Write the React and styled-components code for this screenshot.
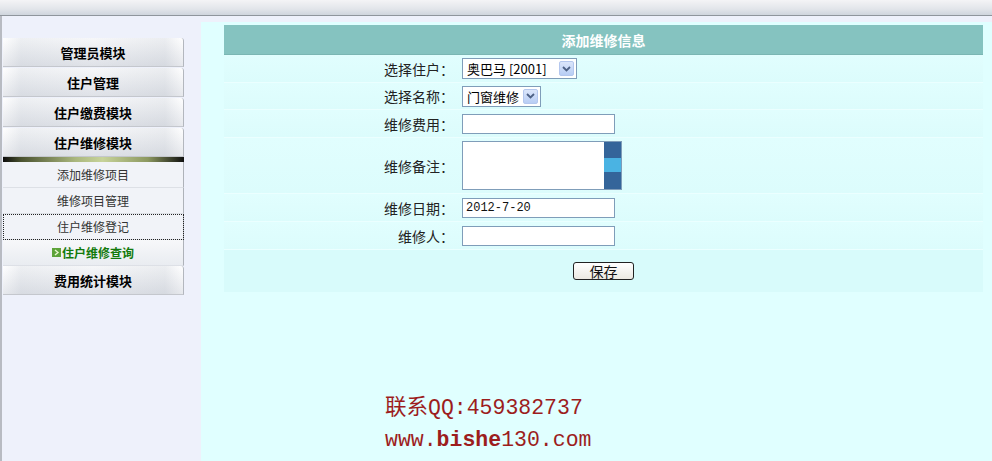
import React from "react";
import styled, { createGlobalStyle } from "styled-components";

const Global = createGlobalStyle`
  html, body { margin: 0; padding: 0; }
  body {
    background: #eef1fb;
    font-family: "Noto Sans CJK SC", "Liberation Sans", sans-serif;
    font-size: 13px;
    color: #222;
    height: 461px;
    overflow: hidden;
  }
`;

const TopBar = styled.div`
  height: 15px;
  background: linear-gradient(#f4f4f6, #e2e5ea 60%, #cfd5dd);
  border-bottom: 1px solid #8f959c;
`;

const Layout = styled.div`
  display: flex;
  height: 445px;
`;

const Sidebar = styled.div`
  width: 199px;
  border-left: 2px solid #b8bbc2;
  padding-top: 22px;
  background: #eef1fb;
`;

const Menu = styled.div`
  width: 181px;
  margin-left: 1px;
  display: flex;
  flex-direction: column;
`;

const MenuHead = styled.div`
  height: 29px;
  margin-bottom: 1px;
  display: flex;
  align-items: center;
  justify-content: center;
  font-weight: 700;
  font-size: 13px;
  color: #000;
  background: linear-gradient(to right, #ffffff, #eef0f3 10%, #f6f7f9 50%, #eceef1 90%, #ffffff),
    linear-gradient(#fff, #e7e9ed);
  background-blend-mode: multiply;
  border-right: 1px solid #b3b7be;
  border-bottom: 1px solid #c4c7cd;
  border-radius: 0 3px 0 0;
  box-sizing: border-box;
`;

const Divider = styled.div`
  height: 5px;
  background: linear-gradient(to right, #0d0d0d, #4a5230 10%, #aab77e 40%, #c7d39a 55%, #8c9860 80%, #101010);
  margin-top: -1px;
`;

const SubItem = styled.div`
  height: 26px;
  display: flex;
  align-items: center;
  justify-content: center;
  gap: 1px;
  font-size: 12px;
  color: ${(p) => (p.$active ? "#137a0c" : "#333")};
  font-weight: ${(p) => (p.$active ? 700 : 400)};
  background: ${(p) =>
    p.$active ? "linear-gradient(#f7f8fa, #e9ecf1)" : "#f1f3f8"};
  border-right: 1px solid #aeb2b9;
  border-bottom: 1px solid #dde0e6;
  box-sizing: border-box;
  outline: ${(p) => (p.$focus ? "1px dotted #222" : "none")};
  outline-offset: -1px;
`;

const Main = styled.div`
  flex: 1;
  margin-top: 6px;
  background: #e0ffff;
  padding: 3px 9px 0 23px;
  display: flex;
  flex-direction: column;
`;

const Header = styled.div`
  height: 30px;
  background: #85c3c0;
  color: #fff;
  font-weight: 700;
  font-size: 14px;
  display: flex;
  align-items: center;
  justify-content: center;
  border-bottom: 1px solid #7ab6b3;
  box-sizing: border-box;
`;

const Row = styled.div`
  display: grid;
  grid-template-columns: 231px 1fr;
  align-items: center;
  min-height: ${(p) => p.$h}px;
  background: linear-gradient(#e1fefe, #dcfcfc);
  border-bottom: 1px solid #ebffff;
  box-sizing: border-box;
`;

const Label = styled.div`
  text-align: right;
  padding-right: 1px;
  color: #222;
  font-size: 14px;
`;

const Cell = styled.div`
  padding-left: 7px;
  display: flex;
  align-items: center;
`;

const ButtonRow = styled.div`
  height: 42px;
  background: #d8fbfb;
  display: flex;
  align-items: center;
  padding-left: 349px;
`;

const Select = styled.div`
  width: ${(p) => p.$w}px;
  height: 21px;
  box-sizing: border-box;
  border: 1px solid #7f9db9;
  background: #fff;
  display: flex;
  align-items: center;
  justify-content: space-between;
  padding: 0 2px 0 4px;
  font-size: 13px;
  color: #000;
`;

const Arrow = styled.div`
  width: 15px;
  height: 15px;
  border-radius: 2px;
  background: linear-gradient(#dbe6fb, #b8cdf4);
  border: 1px solid #b4c7ee;
  box-sizing: border-box;
  display: flex;
  align-items: center;
  justify-content: center;
`;

const Input = styled.div`
  width: 153px;
  height: 20px;
  box-sizing: border-box;
  border: 1px solid #7f9db9;
  background: #fff;
  font-family: "Liberation Mono", "Noto Sans CJK SC", monospace;
  font-size: 12px;
  line-height: 18px;
  padding-left: 3px;
  color: #111;
`;

const AreaWrap = styled.div`
  width: 160px;
  height: 49px;
  box-sizing: border-box;
  border: 1px solid #7f9db9;
  background: #fff;
  display: flex;
  justify-content: flex-end;
`;

const Scroll = styled.div`
  width: 17px;
  display: flex;
  flex-direction: column;
  background: #34659a;
`;

const Thumb = styled.div`
  margin-top: 16px;
  height: 14px;
  background: #4ab3e3;
`;

const SaveBtn = styled.div`
  width: 61px;
  height: 18px;
  box-sizing: border-box;
  border: 1px solid #222;
  border-radius: 3px;
  background: linear-gradient(#ffffff, #ece9e2);
  display: flex;
  align-items: center;
  justify-content: center;
  font-size: 14px;
  color: #111;
`;

const Watermark = styled.div`
  margin: 100px 0 0 161px;
  color: #9c1d1d;
  font-family: "Liberation Mono", "Noto Sans CJK SC", monospace;
  font-size: 21.5px;
  line-height: 32px;
`;

const Bold = styled.b`
  font-weight: 700;
`;

const Chevron = () => (
  <svg width="9" height="6" viewBox="0 0 9 6">
    <path d="M1 1 L4.5 4.5 L8 1" fill="none" stroke="#4d6185" strokeWidth="1.8" />
  </svg>
);

const GoIcon = () => (
  <svg width="9" height="9" viewBox="0 0 9 9">
    <rect x="0" y="0" width="9" height="9" fill="#5da33a" />
    <path d="M3 2 L6 4.5 L3 7" fill="none" stroke="#e8f7d0" strokeWidth="1.4" />
  </svg>
);

export default function App() {
  return (
    <>
      <Global />
      <TopBar />
      <Layout>
        <Sidebar>
          <Menu>
            <MenuHead>管理员模块</MenuHead>
            <MenuHead>住户管理</MenuHead>
            <MenuHead>住户缴费模块</MenuHead>
            <MenuHead>住户维修模块</MenuHead>
            <Divider />
            <SubItem>添加维修项目</SubItem>
            <SubItem>维修项目管理</SubItem>
            <SubItem $focus>住户维修登记</SubItem>
            <SubItem $active>
              <GoIcon />
              住户维修查询
            </SubItem>
            <MenuHead>费用统计模块</MenuHead>
          </Menu>
        </Sidebar>
        <Main>
          <Header>添加维修信息</Header>
          <Row $h={28}>
            <Label>选择住户：</Label>
            <Cell>
              <Select $w={115}>
                奥巴马 [2001]
                <Arrow>
                  <Chevron />
                </Arrow>
              </Select>
            </Cell>
          </Row>
          <Row $h={27}>
            <Label>选择名称：</Label>
            <Cell>
              <Select $w={79}>
                门窗维修
                <Arrow>
                  <Chevron />
                </Arrow>
              </Select>
            </Cell>
          </Row>
          <Row $h={28}>
            <Label>维修费用：</Label>
            <Cell>
              <Input />
            </Cell>
          </Row>
          <Row $h={56}>
            <Label>维修备注：</Label>
            <Cell>
              <AreaWrap>
                <Scroll>
                  <Thumb />
                </Scroll>
              </AreaWrap>
            </Cell>
          </Row>
          <Row $h={28}>
            <Label>维修日期：</Label>
            <Cell>
              <Input>2012-7-20</Input>
            </Cell>
          </Row>
          <Row $h={28}>
            <Label>维修人：</Label>
            <Cell>
              <Input />
            </Cell>
          </Row>
          <ButtonRow>
            <SaveBtn>保存</SaveBtn>
          </ButtonRow>
          <Watermark>
            <div>联系QQ:459382737</div>
            <div>
              www.<Bold>bishe</Bold>130.com
            </div>
          </Watermark>
        </Main>
      </Layout>
    </>
  );
}
